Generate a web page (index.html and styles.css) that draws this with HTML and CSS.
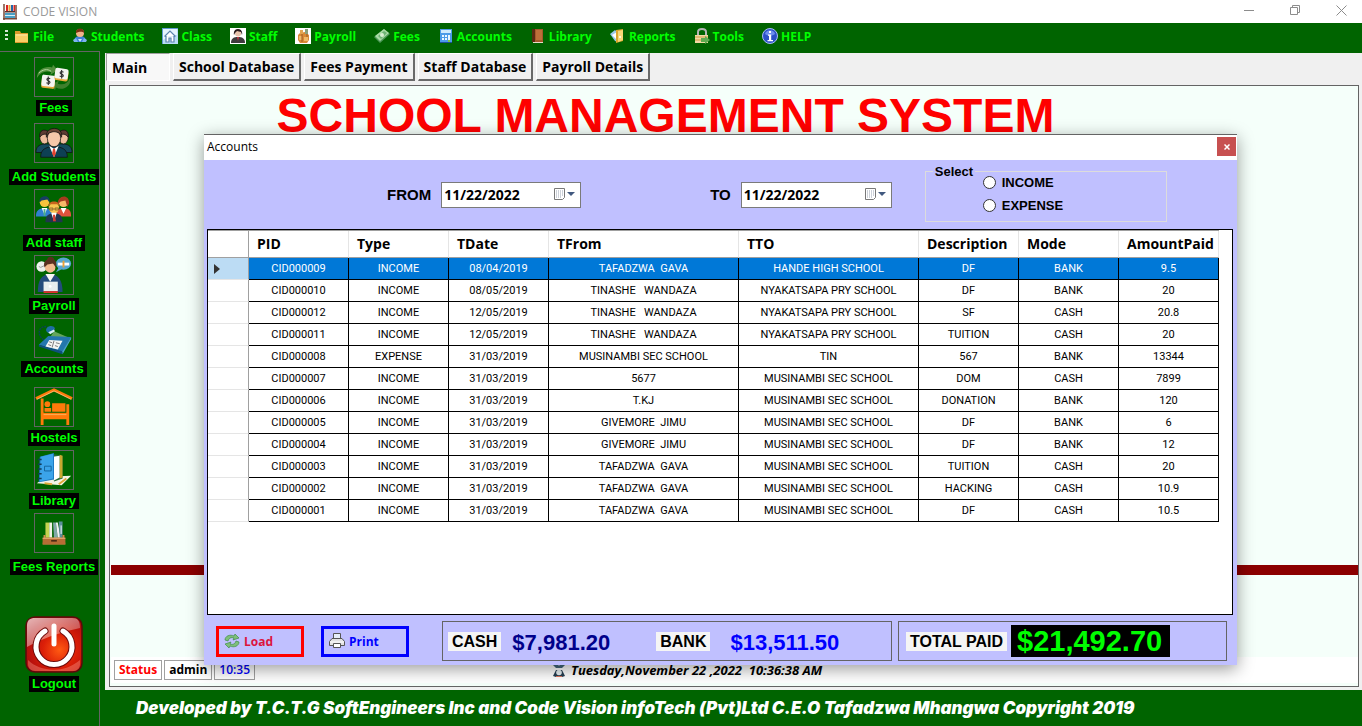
FILE: index.html
```html
<!DOCTYPE html>
<html lang="en">
<head>
    <meta charset="UTF-8">
    <meta name="viewport" content="width=device-width, initial-scale=1.0">
    <title>CODE VISION</title>
    <link rel="stylesheet" href="styles.css">
</head>
<body>
    <header class="titlebar">
        <svg class="app-icon" viewBox="0 0 14 16"><path d="M1 0v16M13 1v14" stroke="#7a4a3a" stroke-width="1.5"/><path d="M3 1h2v6H3z" fill="#d22"/><path d="M5.500 1h2v6h-2z" fill="#e9a23b"/><path d="M8 1h2v6H8z" fill="#26a"/><path d="M10.500 1h1.500v6h-1.500z" fill="#d22"/><path d="M2 7h10v1.500H2z" fill="#533"/><path d="M2 9h10v5H2z" fill="#4a9fc4"/><path d="M2 11.500h10" stroke="#d8eef5"/><path d="M0 14h14v1.500H0z" fill="#7a4a3a"/></svg>
        <span class="app-name">CODE VISION</span>
        <div class="window-buttons">
            <button type="button" aria-label="Minimize"><svg viewBox="0 0 11 11"><path d="M0 5.500h10"/></svg></button>
            <button type="button" aria-label="Restore"><svg viewBox="0 0 11 11"><path d="M.5 2.500h7v7h-7zM2.500 2.500v-2h7v7h-2"/></svg></button>
            <button type="button" aria-label="Close"><svg viewBox="0 0 11 11"><path d="M.5.5l10 10M10.500.5l-10 10"/></svg></button>
        </div>
    </header>

    <nav class="menubar">
        <span class="grip"></span>
        <a href="#"><svg viewBox="0 0 16 16"><path d="M1 3h5l1 2h7v10H1z" fill="#d99a2b"/><path d="M1 6h13v8H1z" fill="#f8cf66"/><path d="M2 7h11" stroke="#fde7a5"/></svg>File</a>
        <a href="#"><svg viewBox="0 0 16 16"><path d="M2 14c0-4 2-6 6-6s6 2 6 6z" fill="#3b82d8"/><circle cx="8" cy="5" r="4" fill="#f0b48a"/><path d="M4 5c-1-6 9-6 8 0-2-2-5-1-8 0z" fill="#7a3212"/><path d="M1 12l3-2 2 4H2zM15 12l-3-2-2 4h4z" fill="#7db4f0"/><path d="M6 11h4l-2 3z" fill="#cfe4fb"/></svg>Students</a>
        <a href="#"><svg viewBox="0 0 16 16"><path d="M0 0h16v16H0z" fill="#b9dcf5"/><path d="M1 1h14v6C9 7 5 9 1 12z" fill="#e4f4fd"/><path d="M0 .5h16M.5 0v16" stroke="#5f9bd0"/><path d="M2.500 8.500L8 3l5.500 5.500M4 8v6h3v-4h2v4h3V8" fill="#fff" stroke="#5a84ad" stroke-width="1.200"/></svg>Class</a>
        <a href="#"><svg viewBox="0 0 16 16"><path d="M0 0h16v16H0z" fill="#fff"/><path d="M1 15c0-5 3-6 7-6s7 1 7 6z" fill="#3e3a3c"/><circle cx="8" cy="5.500" r="3" fill="#e8c4ae"/><path d="M4 7C2-1 14-1 12 7l-1-3-4-1-2 2z" fill="#281a1c"/><path d="M7 9h2l-1 4z" fill="#c34"/></svg>Staff</a>
        <a href="#"><svg viewBox="0 0 16 16"><path d="M0 0h16v16H0z" fill="#fff"/><path d="M3 7l2-2 5-1 4 3v5l-2 3H5l-2-3z" fill="#d98a35"/><path d="M4 8h3v4H4zM9 9h4v4H9z" fill="#f0b968"/><path d="M5 2h3v4H5z" fill="#e2a550"/><path d="M10 1h3v5h-3z" fill="#8aa07a"/><path d="M7 6v8M12 6v3" stroke="#9b5a24"/></svg>Payroll</a>
        <a href="#"><svg viewBox="0 0 16 16"><path d="M0 9l10-8 6 5-10 9z" fill="#4f9a5a"/><path d="M1 8l9-7 5 4-9 8z" fill="#a9dba5"/><path d="M4 8l6-5 3 2-6 6z" fill="#6db574"/><circle cx="8" cy="7" r="2" fill="#d8f0d2"/></svg>Fees</a>
        <a href="#"><svg viewBox="0 0 16 16"><rect x="2" y="1" width="12" height="14" fill="#4c9be8"/><path d="M3 2h10v3H3z" fill="#cfeafc"/><path d="M4 7h2v2H4zM7 7h2v2H7zM4 10h2v2H4zM7 10h2v2H7zM10 7h2v5h-2z" fill="#eaf6ff"/><path d="M10 12h2v2h-2z" fill="#83c840"/><path d="M2 14.500h12" stroke="#1d4f98"/></svg>Accounts</a>
        <a href="#"><svg viewBox="0 0 16 16"><path d="M3 1h10v13H3z" fill="#a5592b"/><path d="M2 1h3v13H2z" fill="#5b2a12"/><path d="M6 2h6v10H6z" fill="#bd6f3a"/><path d="M3 14h10v1H3z" fill="#e8dccb"/></svg>Library</a>
        <a href="#"><svg viewBox="0 0 16 16"><path d="M0 6l5-4 3 3v9l-3-1z" fill="#9cc8e8"/><path d="M2 7l5-3v8z" fill="#fff"/><path d="M6 2l7-1v12l-7 2z" fill="#dda72f"/><path d="M8 3l5-1v10l-5 2z" fill="#f7d877"/><path d="M9 8h2v2H9z" fill="#fff6d8"/></svg>Reports</a>
        <a href="#"><svg viewBox="0 0 16 16"><path d="M4 8V4c0-4 8-4 8 0v4" fill="none" stroke="#b5b5b5" stroke-width="2"/><path d="M1 7h13v8H1z" fill="#f1d9a4"/><path d="M1 9h13M1 12h9" stroke="#d29a45"/><path d="M7 10h4V8l5 4-5 4v-2H7z" fill="#5eab50"/></svg>Tools</a>
        <a href="#"><svg viewBox="0 0 16 16"><circle cx="8" cy="8" r="7.500" fill="#2c50c8" stroke="#a9bdf5"/><path d="M3 6c1-5 9-5 10 0-3 2-7 2-10 0z" fill="#6c8eee"/><path d="M7 3h2v2H7zM6 6.500h3.200V12H11v1.200H5.500V12H7V7.700H6z" fill="#fff"/></svg>HELP</a>
    </nav>

    <div class="layout">
        <aside class="sidebar">
            <button type="button" class="side-item gap-md">
                <svg class="side-icon" viewBox="0 0 40 40"><path d="M2 21C2 12 11 8 18 10l1-3 5 6-8 5 1-3c-6-2-11 0-15 6z" fill="#4f8f3b"/><path d="M4 16c4-4 9-5 13-2" stroke="#b7dba2" fill="none"/><path d="M37 21c2 9-8 14-15 10l-1 3-4-6 8-4-1 3c6 2 10 0 13-6z" fill="#3f7f2d"/><rect x="7" y="20" width="14" height="12" rx="2" transform="rotate(6 14 25)" fill="#e8a93a"/><rect x="7" y="18" width="14" height="12" rx="2" transform="rotate(6 14 24)" fill="#f4f4f0"/><rect x="21" y="13" width="14" height="11" rx="2" transform="rotate(8 28 18)" fill="#e8a93a"/><rect x="21" y="11" width="14" height="11" rx="2" transform="rotate(8 28 16)" fill="#f4f4f0"/><path d="M16 22c-3-2-5 1-2 2s2 4-2 2M14 19.500v9M30 15c-3-2-5 1-2 2s2 4-2 2M28 12.500v9" fill="none" stroke="#333" stroke-width="1.200"/></svg>
                <span>Fees</span>
            </button>
            <button type="button" class="side-item tall">
                <svg class="side-icon" viewBox="0 0 40 40"><g stroke="#111" stroke-width=".8"><path d="M1 30c0-6 3-8 8-9h22c5 1 8 3 8 9z" fill="#154a5e"/><ellipse cx="10" cy="14" rx="5" ry="7" fill="#eebd9d"/><ellipse cx="30" cy="14" rx="5" ry="7" fill="#eebd9d"/><path d="M5 14c-1-8 5-9 9-6v4c-3-2-6-2-9 2zM35 14c1-8-5-9-9-6v4c3-2 6-2 9 2z" fill="#5d3b32"/><path d="M6 35c0-9 5-10 14-12 9 2 14 3 14 12z" fill="#0d4054"/><ellipse cx="20" cy="15" rx="7" ry="9" fill="#f5c8aa"/><path d="M12 14C10 2 30 1 28 14l-2-4c-5-3-8-2-12 0z" fill="#6a4435"/></g><path d="M15 23l5 3 5-3-5 12z" fill="#fff"/><path d="M19 26h2l1 5-2 4-2-4z" fill="#e2432f"/></svg>
                <span>Add Students</span>
            </button>
            <button type="button" class="side-item tall">
                <svg class="side-icon" viewBox="0 0 40 40"><path d="M1 28c0-7 3-8 9-9 6 1 8 2 8 9z" fill="#2f7fd0"/><path d="M22 28c0-7 3-8 8-9 6 1 8 2 8 9z" fill="#e0533d"/><circle cx="10" cy="13" r="5" fill="#f8c33c"/><circle cx="30" cy="13" r="5" fill="#f8b968"/><path d="M5 13C3 5 17 4 15 13l-2-3-6 1z" fill="#173e63"/><path d="M24 15c-1-9 12-12 12-1l-2 4-2-7-5 1z" fill="#a53b1e"/><path d="M7 19l3 7 3-7zM27 19l3 6 3-6z" fill="#fff"/><path d="M9 20h2v7H9z" fill="#4eb08a"/><path d="M11 34c0-7 3-9 9-10 6 1 9 3 9 10z" fill="#20364f"/><circle cx="20" cy="19" r="5.500" fill="#f9c650"/><path d="M14 18c-1-8 13-8 12 0l-2-3h-8z" fill="#c9641f"/><path d="M15 19h4v2h-4zM21 19h4v2h-4z" fill="none" stroke="#6b4a22" stroke-width=".8"/><path d="M17 24l3 9 3-9z" fill="#fff"/><path d="M19 26h2l1 7h-3z" fill="#d33c2f"/></svg>
                <span>Add staff</span>
            </button>
            <button type="button" class="side-item">
                <svg class="side-icon" viewBox="0 0 40 40"><circle cx="7" cy="11" r="5.500" fill="#eef1ee"/><path d="M4 11l2 1 4-2" stroke="#999" fill="none"/><ellipse cx="30" cy="8" rx="8" ry="6.500" fill="#58a7d2"/><path d="M25 12l-3 5 6-3z" fill="#58a7d2"/><path d="M24 7h12v3H24z" fill="#fff"/><path d="M29 5h2v7h-2z" fill="#e9a23b"/><path d="M3 38c0-12 3-18 13-19 9 1 13 7 13 19z" fill="#234c7c"/><path d="M11 19l5 8 5-8z" fill="#f7f7f2"/><circle cx="16" cy="12" r="5.500" fill="#f3b98e"/><path d="M10 12C8 5 13 5 13 3c1-3 6-3 7 0 0 2 4 3 2 9l-3-4-6 1z" fill="#5a2f20"/><path d="M9 27h15v10H9z" fill="#e8eeee"/><circle cx="16" cy="32" r="1.500" fill="#fff"/><path d="M9 37h15v2H9z" fill="#d8332a"/></svg>
                <span>Payroll</span>
            </button>
            <button type="button" class="side-item gap-lg">
                <svg class="side-icon" viewBox="0 0 40 40"><path d="M20 13l14 6-20 3z" fill="#a8d29a" opacity=".6"/><path d="M4 27l10-9 24 1-9 16z" fill="#2377ae"/><path d="M4 27l25 7v3L4 29z" fill="#0f4f7d"/><path d="M38 19l-9 15v3l9-16z" fill="#4ba2cf"/><path d="M11 29l4-7 14 1-5 9z" fill="#f4f6f4"/><path d="M20 23l-2 7M15 24l3 1M14 27l3 1M22 25l4 1M21 28l3 1" stroke="#777" fill="none"/><path d="M9 22C2 17 3 7 13 8" fill="none" stroke="#0b3f5c" stroke-width="1.500" stroke-dasharray="2 1"/><path d="M12 13c-2-5 7-8 9-3l-2 4-5 1z" fill="#1d6ea3"/><path d="M14 14l6-3 1 2-5 3z" fill="#d9f0f4"/></svg>
                <span>Accounts</span>
            </button>
            <button type="button" class="side-item">
                <svg class="side-icon" viewBox="0 0 40 40"><path d="M1 11L20 2l19 9" fill="none" stroke="#ff7a0a" stroke-width="3"/><path d="M2 12L20 3l18 9" fill="none" stroke="#f6dfb8" stroke-width=".6"/><path d="M6 11h3v15h24v-9h3v22h-3v-6H9v6H6z" fill="#ff7a0a"/><circle cx="13" cy="17" r="3" fill="#ff7a0a"/><path d="M10 21h7v4h-7zM18 16h14v9H18z" fill="#ff7a0a"/><path d="M9 28h24" stroke="#ffb15c"/></svg>
                <span>Hostels</span>
            </button>
            <button type="button" class="side-item">
                <svg class="side-icon" viewBox="0 0 40 40"><path d="M2 34l9-7 27-1-10 10z" fill="#f3f2e6"/><path d="M10 34l8 1M25 35l8-6" stroke="#e0a83a" stroke-width="2"/><path d="M18 3l11 2v24l-9 3z" fill="#236a35"/><path d="M19 6l7-1v23l-6 3z" fill="#fff"/><path d="M26 4l3 1v23l-3 1z" fill="#c8a92f"/><path d="M5 6l15-4v28L4 33z" fill="#1d79c0"/><path d="M6 6l13-3v26L5 32z" fill="#3ba4ea"/><path d="M10 16h7v5h-7z" fill="none" stroke="#14649c"/><path d="M3 9h4M3 14h4M3 19h4M3 24h4M3 29h4" stroke="#123c58" stroke-width="1.500"/></svg>
                <span>Library</span>
            </button>
            <button type="button" class="side-item tall">
                <svg class="side-icon" viewBox="0 0 40 40"><path d="M11 9h4v16h-4z" fill="#c5d250"/><path d="M15 9h3v16h-3z" fill="#f2f2e6"/><path d="M19 9h3l2 17h-4z" fill="#7fa8a8"/><path d="M22 9h2l3 16h-3z" fill="#f0f0f4"/><path d="M25 8h4v17h-3z" fill="#5b8f9b"/><path d="M27.500 12v9" stroke="#fff"/><path d="M9 22h2v3h18v-3h2v3l1 7H8l1-7z" fill="#d48b4e"/><path d="M8 25h24v7H8z" fill="#b66d35"/><path d="M8 25.500h24" stroke="#f0b984"/><path d="M17 27.500h6v1.500h-6z" fill="#3c210f"/></svg>
                <span>Fees Reports</span>
            </button>
            <button type="button" class="side-item logout">
                <svg class="power-icon" viewBox="0 0 58 57"><defs><radialGradient id="red" cx=".6" cy=".6" r=".6"><stop offset="0" stop-color="#ff5a12"/><stop offset=".5" stop-color="#dc1f08"/><stop offset="1" stop-color="#b00d0d"/></radialGradient><linearGradient id="shine" x1="0" y1="0" x2="1" y2="1"><stop offset="0" stop-color="#fff" stop-opacity=".7"/><stop offset="1" stop-color="#fff" stop-opacity=".1"/></linearGradient></defs><rect x="1" y="1" width="56" height="55" rx="9" fill="url(#red)" stroke="#5b0a0a" stroke-width="1.500"/><path d="M2 31V10c0-6 3-8 8-8h37c6 0 8 3 8 10C42 15 24 19 2 31z" fill="url(#shine)"/><path d="M3 44c12 12 36 14 52 0v5c-1 4-3 6-7 6H10c-4 0-7-3-7-7z" fill="#ff9a86" opacity=".4"/><path d="M20 15a18 18 0 1 0 18 0" fill="none" stroke="#6f0a0a" stroke-width="7" stroke-linecap="round"/><path d="M20 15a18 18 0 1 0 18 0M29 10v18" fill="none" stroke="#fff" stroke-width="5" stroke-linecap="round"/></svg>
                <span>Logout</span>
            </button>
        </aside>

        <main class="content">
            <div class="workspace">
                <div class="tabs">
                    <button type="button" class="tab active">Main</button>
                    <button type="button" class="tab">School Database</button>
                    <button type="button" class="tab">Fees Payment</button>
                    <button type="button" class="tab">Staff Database</button>
                    <button type="button" class="tab">Payroll Details</button>
                </div>
                <section class="panel">
                    <h1>SCHOOL MANAGEMENT SYSTEM</h1>
                    <div class="divider"></div>
                    <div class="statusbar">
                        <div class="status-left">
                            <span class="cell red">Status</span>
                            <span class="cell">admin</span>
                            <span class="cell blue">10:35</span>
                        </div>
                        <div class="clock">
                            <svg viewBox="0 0 16 16"><path d="M1 2l5-1 2 3 2-3 5 1-4 4H5z" fill="#456a7e"/><path d="M2 14l3-6h6l3 6-3 1H5z" fill="#263f52"/><circle cx="8" cy="10.500" r="2.800" fill="#e8f1f4"/><path d="M5 14h6v1H5z" fill="#e0735a"/></svg>
                            <span>Tuesday,November 22 ,2022&nbsp; 10:36:38 AM</span>
                        </div>
                    </div>
                </section>
            </div>
            <footer class="footer">Developed by T.C.T.G SoftEngineers Inc and Code Vision infoTech (Pvt)Ltd C.E.O Tafadzwa Mhangwa Copyright 2019</footer>
        </main>
    </div>

    <!-- Accounts window -->
    <div class="dialog">
        <div class="dialog-title">
            <span>Accounts</span>
            <button type="button" class="close" aria-label="Close"><svg viewBox="0 0 6 6"><path d="M.5.5l5 5M5.500.5l-5 5"/></svg></button>
        </div>
        <form class="filters">
            <div class="date-field from">
                <label for="from">FROM</label>
                <div class="picker">
                    <input type="text" id="from" value="11/22/2022">
                    <button type="button" aria-label="Open calendar"><svg viewBox="0 0 21 13"><path d="M.5.5h10v9l-2 2h-8z" fill="#fff" stroke="#787878"/><path d="M2 3h7M2 5h7M2 7h7M2 9h6" stroke="#9aa4b4" stroke-dasharray="1 1"/><path d="M13 4h8l-4 4z" fill="#41597f"/></svg></button>
                </div>
            </div>
            <div class="date-field to">
                <label for="to">TO</label>
                <div class="picker">
                    <input type="text" id="to" value="11/22/2022">
                    <button type="button" aria-label="Open calendar"><svg viewBox="0 0 21 13"><path d="M.5.5h10v9l-2 2h-8z" fill="#fff" stroke="#787878"/><path d="M2 3h7M2 5h7M2 7h7M2 9h6" stroke="#9aa4b4" stroke-dasharray="1 1"/><path d="M13 4h8l-4 4z" fill="#41597f"/></svg></button>
                </div>
            </div>
            <fieldset class="select-box">
                <legend>Select</legend>
                <label><input type="radio" name="kind"> INCOME</label>
                <label><input type="radio" name="kind"> EXPENSE</label>
            </fieldset>
        </form>

        <div class="grid">
            <table>
                <colgroup>
                    <col class="w-head"><col class="w-sm"><col class="w-sm"><col class="w-sm"><col class="w-lg"><col class="w-md"><col class="w-sm"><col class="w-sm"><col class="w-sm">
                </colgroup>
                <thead>
                    <tr><th></th><th>PID</th><th>Type</th><th>TDate</th><th>TFrom</th><th>TTO</th><th>Description</th><th>Mode</th><th>AmountPaid</th></tr>
                </thead>
                <tbody>
                    <tr class="selected"><td><svg class="marker" viewBox="0 0 6 10"><path d="M0 0l6 5-6 5z" fill="#333"/></svg></td><td>CID000009</td><td>INCOME</td><td>08/04/2019</td><td>TAFADZWA  GAVA</td><td>HANDE HIGH SCHOOL</td><td>DF</td><td>BANK</td><td>9.5</td></tr>
                    <tr><td></td><td>CID000010</td><td>INCOME</td><td>08/05/2019</td><td>TINASHE   WANDAZA</td><td>NYAKATSAPA PRY SCHOOL</td><td>DF</td><td>BANK</td><td>20</td></tr>
                    <tr><td></td><td>CID000012</td><td>INCOME</td><td>12/05/2019</td><td>TINASHE   WANDAZA</td><td>NYAKATSAPA PRY SCHOOL</td><td>SF</td><td>CASH</td><td>20.8</td></tr>
                    <tr><td></td><td>CID000011</td><td>INCOME</td><td>12/05/2019</td><td>TINASHE   WANDAZA</td><td>NYAKATSAPA PRY SCHOOL</td><td>TUITION</td><td>CASH</td><td>20</td></tr>
                    <tr><td></td><td>CID000008</td><td>EXPENSE</td><td>31/03/2019</td><td>MUSINAMBI SEC SCHOOL</td><td>TIN</td><td>567</td><td>BANK</td><td>13344</td></tr>
                    <tr><td></td><td>CID000007</td><td>INCOME</td><td>31/03/2019</td><td>5677</td><td>MUSINAMBI SEC SCHOOL</td><td>DOM</td><td>CASH</td><td>7899</td></tr>
                    <tr><td></td><td>CID000006</td><td>INCOME</td><td>31/03/2019</td><td>T.KJ</td><td>MUSINAMBI SEC SCHOOL</td><td>DONATION</td><td>BANK</td><td>120</td></tr>
                    <tr><td></td><td>CID000005</td><td>INCOME</td><td>31/03/2019</td><td>GIVEMORE  JIMU</td><td>MUSINAMBI SEC SCHOOL</td><td>DF</td><td>BANK</td><td>6</td></tr>
                    <tr><td></td><td>CID000004</td><td>INCOME</td><td>31/03/2019</td><td>GIVEMORE  JIMU</td><td>MUSINAMBI SEC SCHOOL</td><td>DF</td><td>BANK</td><td>12</td></tr>
                    <tr><td></td><td>CID000003</td><td>INCOME</td><td>31/03/2019</td><td>TAFADZWA  GAVA</td><td>MUSINAMBI SEC SCHOOL</td><td>TUITION</td><td>CASH</td><td>20</td></tr>
                    <tr><td></td><td>CID000002</td><td>INCOME</td><td>31/03/2019</td><td>TAFADZWA  GAVA</td><td>MUSINAMBI SEC SCHOOL</td><td>HACKING</td><td>CASH</td><td>10.9</td></tr>
                    <tr><td></td><td>CID000001</td><td>INCOME</td><td>31/03/2019</td><td>TAFADZWA  GAVA</td><td>MUSINAMBI SEC SCHOOL</td><td>DF</td><td>CASH</td><td>10.5</td></tr>
                </tbody>
            </table>
        </div>

        <div class="totals">
            <button type="button" class="action load"><svg viewBox="0 0 16 16"><path d="M1 7c0-4 5-6 9-4l1-2 4 4-6 2 1-2C7 4 5 5 4 8z" fill="#7fbf7a" stroke="#3f8c4a" stroke-width=".7"/><path d="M15 9c0 4-5 6-9 4l-1 2-4-4 6-2-1 2c3 1 5 0 6-3z" fill="#7fbf7a" stroke="#3f8c4a" stroke-width=".7"/></svg>Load</button>
            <button type="button" class="action print"><svg viewBox="0 0 16 16"><path d="M4.500.5h7v6h-7z" fill="#e6eef8" stroke="#555"/><path d="M3 5.500h10l2.500 3v4h-15v-4z" fill="#e2e2e2" stroke="#555"/><path d="M1 9h14" stroke="#fff"/><path d="M4.500 10.500h7v4h-7z" fill="#fff" stroke="#555"/></svg>Print</button>
            <div class="sum-box balances">
                <span class="tag">CASH</span>
                <output class="cash">$7,981.20</output>
                <span class="tag bank-tag">BANK</span>
                <output class="bank">$13,511.50</output>
            </div>
            <div class="sum-box total">
                <span class="tag">TOTAL PAID</span>
                <output class="grand">$21,492.70</output>
            </div>
        </div>
    </div>
</body>
</html>
```
FILE: styles.css
```css
* {
    box-sizing: border-box;
}
body {
    margin: 0;
    height: 100vh;
    display: flex;
    flex-direction: column;
    position: relative;
    overflow: hidden;
    background-color: #006400;
    font-family: "Open Sans", "Noto Sans", sans-serif;
    font-size: 12px;
    color: #000;
}
button {
    font-family: inherit;
    margin: 0;
    cursor: pointer;
}

/* top bars */
.titlebar {
    display: flex;
    align-items: center;
    height: 23px;
    padding: 0 15px 0 3px;
    background-color: #fff;
    color: #999;
}
.app-icon {
    width: 14px;
    height: 16px;
    margin-right: 6px;
}
.window-buttons {
    display: flex;
    gap: 35px;
    margin-left: auto;
    padding-bottom: 2px;
}
.window-buttons button {
    display: flex;
    padding: 0;
    border: none;
    background: none;
}
.window-buttons svg {
    width: 11px;
    height: 11px;
    fill: none;
    stroke: #8c8c8c;
}
.menubar {
    display: flex;
    align-items: center;
    gap: 18px;
    height: 30px;
    padding: 0 5px 4px;
}
.menubar a {
    display: flex;
    align-items: center;
    gap: 3px;
    color: #0f0;
    font-weight: bold;
    text-decoration: none;
}
.menubar svg {
    width: 16px;
    height: 16px;
}
.grip {
    width: 3px;
    height: 12px;
    margin-right: -12px;
    background: repeating-linear-gradient(#d8e8d8 0 2px, transparent 2px 4px);
}

/* left side */
.layout {
    flex: 1;
    display: flex;
    min-height: 0;
}
.sidebar {
    width: 100px;
    margin: -2px 5px 0 0;
    padding: 5px 0 0 9px;
    border-top: 1px solid #646464;
    border-right: 1px solid #646464;
    display: flex;
    flex-direction: column;
    align-items: center;
}
.side-item {
    display: flex;
    flex-direction: column;
    align-items: center;
    gap: 3px;
    margin-bottom: 4px;
    padding: 0;
    border: none;
    background: none;
    font-family: "Liberation Sans", Arial, sans-serif;
    font-size: 13px;
    line-height: 16px;
    font-weight: bold;
    color: #0f0;
}
.side-item.tall {
    gap: 6px;
}
.side-item.gap-md {
    margin-bottom: 7px;
}
.side-item.gap-lg {
    margin-bottom: 10px;
}
.side-item span {
    padding: 0 3px;
    background-color: #000;
    white-space: nowrap;
}
.side-icon {
    width: 40px;
    height: 40px;
    border: 1px solid #646464;
}
.logout {
    margin-top: 37px;
}
.power-icon {
    width: 58px;
    height: 57px;
}

/* main area */
.content {
    flex: 1;
    display: flex;
    flex-direction: column;
    min-width: 0;
}
.workspace {
    flex: 1;
    display: flex;
    flex-direction: column;
    padding: 0 3px 3px 1px;
    background-color: #f0f0f0;
}
.tabs {
    display: flex;
    gap: 3px;
    margin-bottom: 4px;
}
.tab {
    height: 28px;
    padding: 0 5px;
    border: 1px solid #fff;
    border-right: 2px solid #696969;
    border-bottom: 2px solid #696969;
    background-color: #f0f0f0;
    color: #000;
    font-size: 14px;
    font-weight: bold;
}
.tab.active {
    width: 64px;
    text-align: left;
    border: 1px solid #a0a0a0;
    border-right-color: #fff;
    border-bottom-color: #fff;
    background-color: #f8f8f8;
}
.panel {
    flex: 1;
    display: flex;
    flex-direction: column;
    margin-left: 3px;
    padding: 1px 0 3px 1px;
    border: 1px solid #646464;
    background-color: #f5fffa;
}
.panel h1 {
    flex: 1;
    margin: 0;
    padding-right: 138px;
    text-align: center;
    font-family: "Liberation Sans", Arial, sans-serif;
    font-size: 48px;
    line-height: 58px;
    color: #f00;
}
.divider {
    height: 10px;
    margin-bottom: 82px;
    background-color: #8b0000;
}
.statusbar {
    display: flex;
    align-items: center;
    height: 26px;
    padding: 0 3px;
    background-color: #fff;
    font-size: 12px;
    font-weight: bold;
}
.status-left {
    display: flex;
    gap: 2px;
    width: 437px;
}
.cell {
    padding: 0 4px;
    border: 1px solid #a0a0a0;
    line-height: 18px;
}
.red {
    color: #f00;
}
.blue {
    color: #00f;
    font-weight: 600;
}
.clock {
    display: flex;
    align-items: center;
    gap: 4px;
    font-size: 13px;
    font-style: italic;
}
.clock svg {
    width: 16px;
    height: 16px;
}
.footer {
    height: 36px;
    padding-left: 31px;
    font-family: Inter, sans-serif;
    font-size: 17px;
    line-height: 36px;
    font-weight: 900;
    font-style: italic;
    color: #fff;
    white-space: nowrap;
}

/* accounts window */
.dialog {
    position: absolute;
    top: 134px;
    right: 125px;
    bottom: 61px;
    left: 204px;
    display: flex;
    flex-direction: column;
    border-top: 1px solid #646464;
    background-color: #c0c0ff;
    box-shadow: 0 4px 16px rgba(0, 0, 0, 0.4);
}
.dialog-title {
    display: flex;
    justify-content: space-between;
    align-items: center;
    height: 25px;
    padding: 0 1px 2px 3px;
    background-color: #fff;
}
.close {
    display: flex;
    justify-content: center;
    align-items: center;
    width: 19px;
    height: 19px;
    padding: 0;
    border: none;
    background-color: #c75050;
}
.close svg {
    width: 6px;
    height: 6px;
    fill: none;
    stroke: #fff;
    stroke-width: 1.5;
}
.filters {
    display: flex;
    align-items: center;
    height: 69px;
    padding-left: 183px;
    font-family: "Liberation Sans", Arial, sans-serif;
    font-size: 13px;
    font-weight: bold;
}
.date-field {
    display: flex;
    align-items: center;
    gap: 10px;
    font-size: 15px;
}
.to {
    margin-left: 129px;
}
.picker {
    display: flex;
    width: 140px;
    height: 26px;
    border: 1px solid #7a7a7a;
    background-color: #fff;
}
.to .picker {
    width: 151px;
}
.picker input {
    flex: 1;
    min-width: 0;
    padding: 0 0 1px 2px;
    border: none;
    background: none;
    font-family: "Open Sans", "Noto Sans", sans-serif;
    font-size: 14px;
    font-weight: bold;
}
.picker button {
    display: flex;
    align-items: center;
    padding: 0 5px;
    border: none;
    background: none;
}
.picker svg {
    width: 21px;
    height: 13px;
}
.select-box {
    display: flex;
    flex-direction: column;
    gap: 8px;
    width: 242px;
    height: 58px;
    margin: 0 0 4px 33px;
    padding: 0 0 0 57px;
    border: 1px solid #dcdcdc;
}
.select-box legend {
    height: 15px;
    margin: 0 0 -4px -50px;
    padding: 0 2px;
    line-height: 15px;
}
.select-box label {
    display: flex;
    align-items: center;
    gap: 6px;
    height: 15px;
}
.select-box input {
    appearance: none;
    width: 13px;
    height: 13px;
    margin: 0;
    border: 1px solid #333;
    border-radius: 50%;
    background-color: #fff;
}
.select-box input:checked {
    background: radial-gradient(#000 40%, #fff 45%);
}
.grid {
    flex: 1;
    min-height: 0;
    margin: 0 4px 0 3px;
    border: 1px solid #000;
    background-color: #fff;
    overflow: hidden;
}
.grid table {
    width: 1011px;
    table-layout: fixed;
    border-collapse: separate;
    border-spacing: 0;
    border-top: 1px solid #a0a0a0;
}
.w-head {
    width: 41px;
}
.w-sm {
    width: 100px;
}
.w-md {
    width: 180px;
}
.w-lg {
    width: 190px;
}
.grid th {
    height: 27px;
    padding: 0 0 0 8px;
    border-right: 1px solid #e5e5e5;
    border-bottom: 1px solid #a0a0a0;
    text-align: left;
    font-size: 14px;
    line-height: 20px;
}
.grid td {
    height: 22px;
    padding: 0;
    border-right: 1px solid #000;
    border-bottom: 1px solid #000;
    text-align: center;
    font-family: Roboto, sans-serif;
    font-size: 11px;
    line-height: 20px;
    white-space: pre;
}
.grid th:first-child {
    border-right-color: #a0a0a0;
}
.grid td:first-child {
    padding-left: 6px;
    border-right-color: #a0a0a0;
    border-bottom-color: #e5e5e5;
    text-align: left;
}
.grid .selected td {
    background-color: #0078d7;
    color: #fff;
}
.grid .selected td:first-child {
    background-color: #bcdcf4;
}
.marker {
    display: block;
    width: 6px;
    height: 10px;
}

/* bottom row */
.totals {
    display: flex;
    align-items: center;
    height: 50px;
    padding: 2px 10px 0 12px;
}
.action {
    display: flex;
    align-items: center;
    gap: 4px;
    width: 88px;
    height: 31px;
    margin-right: 17px;
    padding: 0 5px;
    border: 3px solid #f00;
    background: none;
    font-size: 12px;
    font-weight: bold;
    color: #dc143c;
}
.action.print {
    margin-right: 33px;
    border-color: #00f;
    color: #00f;
}
.action svg {
    width: 16px;
    height: 16px;
}
.sum-box {
    display: flex;
    align-items: center;
    height: 40px;
    border: 1px solid #646464;
    font-family: "Liberation Sans", Arial, sans-serif;
    font-size: 22px;
    font-weight: bold;
}
.balances {
    width: 450px;
    margin-right: 6px;
    padding-left: 5px;
}
.total {
    flex: 1;
    padding-left: 7px;
}
.tag {
    padding: 0 4px;
    background-color: #f5f5f5;
    font-size: 16px;
    line-height: 19px;
}
.cash,
.bank {
    padding-top: 4px;
}
.cash {
    margin-left: 11px;
    color: #00008b;
}
.bank-tag {
    margin-left: 46px;
}
.bank {
    margin-left: 20px;
    color: #00f;
}
.grand {
    margin-left: 4px;
    padding: 0 8px 0 6px;
    background-color: #000;
    color: #0f0;
    font-size: 29px;
    line-height: 32px;
}
```
